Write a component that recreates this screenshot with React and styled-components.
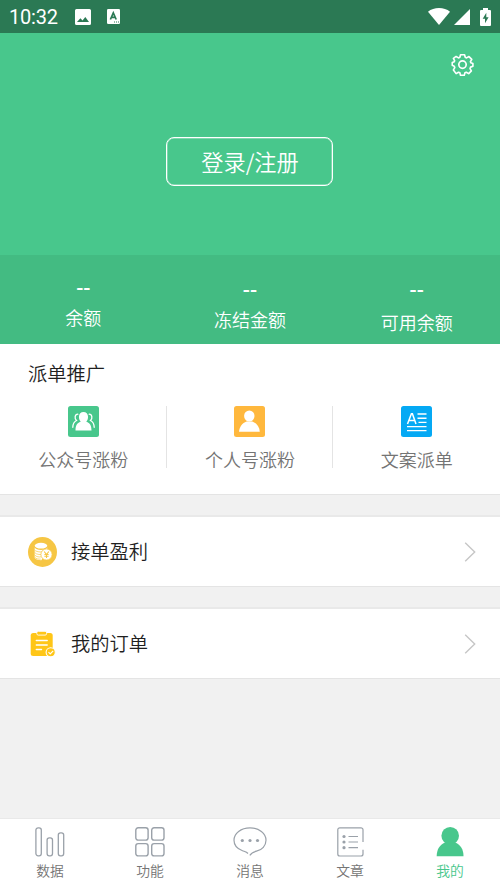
import React from 'react'
import styled, { createGlobalStyle, ThemeProvider } from 'styled-components'

const theme = {
    colors: {
        green: '#48c78c',
        greenDark: '#43bb82',
        status: '#2b7954',
        page: '#f1f1f1',
        line: '#e4e4e4',
        text: '#1f1f1f',
        muted: '#747474',
        icon: '#9aa1a9',
    },
}

const GlobalStyle = createGlobalStyle`
    * {
        box-sizing: border-box;
    }

    body {
        margin: 0;
        font-family: "Noto Sans CJK SC", sans-serif;
        font-weight: 350;
        background: #f1f1f1;
    }
`

const Screen = styled.div`
    display: flex;
    flex-direction: column;
    width: 500px;
    height: 888px;
    overflow: hidden;
    background: ${props => props.theme.colors.page};

    svg {
        display: block;
        flex: none;
    }
`

const StatusBar = styled.header`
    display: flex;
    align-items: center;
    height: 33px;
    flex: none;
    padding: 0 9px;
    color: #fff;
    background: ${props => props.theme.colors.status};
`

const Clock = styled.span`
    width: 66px;
    font: 400 20px/33px Roboto, sans-serif;
    letter-spacing: -.2px;
    padding-top: 2px;
`

const StatusIcons = styled.div`
    display: flex;
    align-items: center;
    gap: ${props => props.$gap};
    margin-left: ${props => (props.$end ? 'auto' : '0')};
`

const Spacer = styled.span`
    width: ${props => props.$width}px;
`

const Hero = styled.section`
    display: flex;
    flex-direction: column;
    align-items: center;
    height: 222px;
    flex: none;
    background: ${props => props.theme.colors.green};
`

const SettingsButton = styled.button`
    align-self: flex-end;
    margin: 20px 26px 61px 0;
    padding: 0;
    border: 0;
    background: none;
`

const LoginButton = styled.button`
    width: 167px;
    height: 49px;
    margin-right: 1px;
    padding: 0 0 2px 1px;
    border: 1px solid #fff;
    box-shadow: inset 0 0 0 .5px rgba(255, 255, 255, .6);
    border-radius: 8px;
    background: none;
    color: #fff;
    font: 350 22.2px/44px "Noto Sans CJK SC", sans-serif;
`

const Stats = styled.section`
    display: grid;
    grid-template-columns: repeat(3, 1fr);
    height: 89px;
    flex: none;
    background: ${props => props.theme.colors.greenDark};
    color: #fff;
`

const Stat = styled.div`
    display: flex;
    flex-direction: column;
    align-items: center;
    padding-top: ${props => props.$top}px;
    font-size: 18px;
    line-height: 22px;
`

const StatValue = styled.span`
    margin-bottom: ${props => props.$gap}px;
    font: 500 21px/22px Roboto, sans-serif;
`

const Promo = styled.section`
    height: 151px;
    flex: none;
    background: #fff;
    border-bottom: 1px solid ${props => props.theme.colors.line};
`

const PromoTitle = styled.h2`
    margin: 0;
    padding: 15px 28px 0;
    font-size: 19.3px;
    font-weight: 350;
    line-height: 28px;
    color: ${props => props.theme.colors.text};
`

const PromoGrid = styled.div`
    display: grid;
    grid-template-columns: repeat(3, 1fr);
    margin-top: 19px;
`

const PromoItem = styled.div`
    display: flex;
    flex-direction: column;
    align-items: center;
    height: 62px;
    color: ${props => props.theme.colors.muted};
    font-size: 18px;
    line-height: 26px;

    &:not(:last-child) {
        box-shadow: inset -1px 0 ${props => props.theme.colors.line};
    }

    span {
        margin-top: 9px;
    }
`

const Row = styled.section`
    display: flex;
    align-items: center;
    height: 72px;
    flex: none;
    margin-top: 20px;
    padding: 0 24px 0 28px;
    background: #fff;
    border-top: 2px solid #e9e9e9;
    border-bottom: 1px solid ${props => props.theme.colors.line};
`

const RowLabel = styled.span`
    flex: 1;
    margin-left: 14px;
    padding-bottom: 1px;
    font-size: 19.3px;
    line-height: 28px;
    color: ${props => props.theme.colors.text};
`

const TabBar = styled.nav`
    display: grid;
    grid-template-columns: repeat(5, 1fr);
    height: 70px;
    margin-top: auto;
    background: #fff;
    border-top: 1px solid #e9e9e9;
`

const Tab = styled.div`
    display: flex;
    flex-direction: column;
    align-items: center;
    padding-top: 8px;
    font-size: 13.8px;
    line-height: 20px;
    color: ${props => (props.$active ? props.theme.colors.green : props.theme.colors.muted)};

    svg {
        margin-bottom: 3px;
        color: ${props => (props.$active ? props.theme.colors.green : props.theme.colors.icon)};
    }
`

const ImageIcon = () => (
    <svg width="16" height="16" viewBox="0 0 16 16">
        <path fill="#fff" fillRule="evenodd" d="M1.5 0h13A1.5 1.5 0 0 1 16 1.500v13a1.500 1.500 0 0 1-1.500 1.500h-13A1.500 1.500 0 0 1 0 14.500v-13A1.500 1.500 0 0 1 1.500 0zM2 13h12l-3.700-5-2.800 3.600L5.400 9.300z" />
    </svg>
)

const KeyboardIcon = () => (
    <svg width="13" height="15" viewBox="0 0 13 15">
        <rect width="13" height="15" rx="1.300" fill="#fff" />
        <path d="M3.400 10.500 6.300 3.800 9.200 10.500M4.500 8.400h3.600" fill="none" stroke="#2b7954" strokeWidth="1.700" />
        <path d="M7 13h1M9 13h1M11 13h1" stroke="#2b7954" strokeWidth="1" />
    </svg>
)

const WifiIcon = () => (
    <svg width="22" height="17" viewBox="0 0 22 17">
        <path fill="#fff" d="M11 17 0 3.700C3 1.300 6.800 0 11 0s8 1.300 11 3.700z" />
    </svg>
)

const SignalIcon = () => (
    <svg width="16" height="16" viewBox="0 0 16 16">
        <path fill="#fff" d="M16 0v16H0z" />
    </svg>
)

const BatteryIcon = () => (
    <svg width="11" height="18" viewBox="0 0 11 18">
        <path fill="#fff" d="M3 0h5v2h2a1 1 0 0 1 1 1v14a1 1 0 0 1-1 1H1a1 1 0 0 1-1-1V3a1 1 0 0 1 1-1h2z" />
        <path fill="#2b7954" d="M6.300 4.800 2.700 10.800h2.300v4.500L8.600 9.300H6.300z" />
    </svg>
)

const GearIcon = () => (
    <svg width="23" height="23" viewBox="0 0 23 23" fill="none" stroke="#fff" strokeWidth="1.700" strokeLinejoin="round">
        <path d="M9.400 1.700h4.200l.7 2.700 1.400.6 2.500-1.400 2.900 2.900-1.400 2.500.5 1.100 2.100.7v2.900l-2.400.9-.6 1.500 1.400 2.400-2.800 2.900-2.500-1.500-1.400.6-.7 2.700H9.400l-.7-2.700-1.400-.6-2.500 1.500L2 17.500l1.400-2.400-.6-1.500-2-.9V9.900l2-.8.5-1.100L2 5.500l2.800-2L7.300 5l1.400-.6z" transform="translate(.5 .1) scale(.96)" />
        <circle cx="11.500" cy="11.600" r="3.700" />
    </svg>
)

const GroupIcon = () => (
    <svg width="31" height="31" viewBox="0 0 31 31">
        <rect width="31" height="31" rx="2.500" fill="#48c78c" />
        <path fill="#fff" d="M7.500 24.500c0-5 1.300-7.200 5.300-9C11.200 14.200 11 12.500 11 10.500 11 7.600 12.800 5.900 15.500 5.900S20 7.600 20 10.500c0 2-.2 3.700-1.800 5 4 1.800 5.300 4 5.300 9z" />
        <path fill="none" stroke="#fff" strokeWidth="1.300" strokeLinecap="round" d="M9.800 8.200C6.800 8.300 6.200 12.500 8.500 14.500 6 15.700 4.900 18 4.800 21.300M21.200 8.200c3 .1 3.600 4.300 1.300 6.300 2.500 1.200 3.600 3.500 3.700 6.800" />
    </svg>
)

const PersonIcon = () => (
    <svg width="31" height="31" viewBox="0 0 31 31">
        <rect width="31" height="31" rx="2.500" fill="#ffb83d" />
        <ellipse cx="15.300" cy="10" rx="5.200" ry="5.500" fill="#fff" />
        <path fill="#fff" d="M5 25.800c.4-5.300 3.400-8.700 7.500-10.300h5.800c4.100 1.600 7.100 5 7.500 10.300z" />
    </svg>
)

const ArticleIcon = () => (
    <svg width="31" height="31" viewBox="0 0 31 31" fill="none" stroke="#fff">
        <rect width="31" height="31" rx="2.500" fill="#05a9f4" stroke="none" />
        <path strokeWidth="1.500" d="M6.500 18 10.400 7.800h1L15 18M8.300 14.400h5.400" />
        <path strokeWidth="1.400" d="M16.500 8h9M16.500 12.200h9M17.500 16.400h8M6 20.600h19.500M6 24.600h19.500" />
    </svg>
)

const CoinsIcon = () => (
    <svg width="29" height="30" viewBox="0 0 29 30">
        <ellipse cx="14.500" cy="15" rx="14.500" ry="15" fill="#f6c644" />
        <ellipse cx="13" cy="8.700" rx="6.300" ry="2.900" fill="#fff" />
        <path fill="#fff" d="M6.700 10.500c1 3.200 11.600 3.200 12.600 0v3l-6 9.800c-2.600 0-5.600-.7-6.600-2.200z" />
        <path fill="none" stroke="#f6c644" strokeWidth=".7" d="M6.700 13c1.500 2.600 11 2.600 12.600 0M6.700 15.500c1.500 2.400 7 2.300 8 1.600M6.700 18c1.500 2 5 2.200 6.500 1.800M6.700 20.300c1.500 1.600 4 2 6 1.800" />
        <circle cx="18.500" cy="17.500" r="5.600" fill="#fff" stroke="#f6c644" strokeWidth=".8" />
        <path fill="none" stroke="#f6c644" strokeWidth="1.100" d="m16.200 14.500 2.300 3 2.300-3M18.500 17.300v3.800M16.400 17.500h4.200M16.400 19.300h4.200" />
    </svg>
)

const OrdersIcon = () => (
    <svg width="29" height="26" viewBox="0 0 29 26">
        <rect x="2.700" y="2" width="22" height="23" rx="2.500" fill="#ffc617" />
        <rect x="8.800" y=".3" width="9.800" height="3.800" rx="1.500" fill="#ffc617" stroke="#fff" strokeWidth=".9" />
        <path stroke="#fff" strokeWidth="1.400" strokeLinecap="round" d="M8.300 9.500h10.900M8.300 14h10.900M8.300 18.500h5.200" />
        <circle cx="22.700" cy="21.300" r="4.600" fill="#ffc617" stroke="#fff" strokeWidth="1.100" />
        <path fill="none" stroke="#fff" strokeWidth="1.200" d="m20.500 21.200 1.700 1.700 3-3" />
    </svg>
)

const Chevron = () => (
    <svg width="12" height="20" viewBox="0 0 12 20" fill="none" stroke="#c6c6c6" strokeWidth="1.400">
        <path d="m1.200.7 9.500 9.300-9.500 9.300" />
    </svg>
)

const DataIcon = () => (
    <svg width="30" height="30" viewBox="0 0 30 30" fill="none" stroke="currentColor" strokeWidth="1.300">
        <rect x=".9" y=".8" width="5.400" height="28" rx="2.200" />
        <rect x="12.100" y="10.800" width="5.400" height="18" rx="2.200" />
        <rect x="23.300" y="5.800" width="5.400" height="23" rx="2.200" />
    </svg>
)

const GridIcon = () => (
    <svg width="30" height="30" viewBox="0 0 30 30" fill="none" stroke="currentColor" strokeWidth="1.400">
        <rect x=".8" y=".8" width="12.300" height="12.300" rx="2.400" />
        <rect x="16.700" y=".8" width="12.300" height="12.300" rx="2.400" />
        <rect x=".8" y="16.600" width="12.300" height="12.300" rx="2.400" />
        <rect x="16.700" y="16.600" width="12.300" height="12.300" rx="2.400" />
    </svg>
)

const MessageIcon = () => (
    <svg width="34" height="30" viewBox="0 0 34 30" fill="none" stroke="currentColor" strokeWidth="1.200">
        <path d="M15 26.500C13.500 24.800 11.800 24.600 9.500 23.700 4.300 21.800 1 18 1 13.200 1 6.300 8 .8 17 .8s16 5.500 16 12.400c0 5.500-4 9.700-9.500 11-3.300.8-5.200 1.700-6.700 4.200" />
        <g fill="currentColor" stroke="none">
            <circle cx="9.300" cy="13.500" r="1.600" />
            <circle cx="17" cy="13.500" r="1.600" />
            <circle cx="24.500" cy="13.500" r="1.600" />
        </g>
    </svg>
)

const NotesIcon = () => (
    <svg width="27" height="30" viewBox="0 0 27 30" fill="none" stroke="currentColor" strokeWidth="1.200">
        <path d="M26 15V2.800a2 2 0 0 0-2-2H2.800a2 2 0 0 0-2 2V27a2 2 0 0 0 2 2H24a2 2 0 0 0 2-2v-4.200" />
        <path d="M11.500 9.500h9.500M11.500 15h9.500M11.500 20.700h9.500" />
        <g fill="currentColor" stroke="none">
            <circle cx="7" cy="9.500" r="1.600" />
            <circle cx="7" cy="15" r="1.600" />
            <circle cx="7" cy="20.700" r="1.600" />
        </g>
    </svg>
)

const MeIcon = () => (
    <svg width="28" height="30" viewBox="0 0 28 30" fill="currentColor">
        <circle cx="14.200" cy="8.800" r="8.800" />
        <path d="M.7 29.300c0-6.800 2.800-11.300 8.300-13.800h10.300c5.500 2.500 8.200 7 8.200 13.800z" />
    </svg>
)

const stats = [
    { label: '余额', top: 22, gap: 7 },
    { label: '冻结金额', top: 24, gap: 7 },
    { label: '可用余额', top: 24, gap: 10 },
]

const promos = [
    { label: '公众号涨粉', Icon: GroupIcon },
    { label: '个人号涨粉', Icon: PersonIcon },
    { label: '文案派单', Icon: ArticleIcon },
]

const rows = [
    { label: '接单盈利', Icon: CoinsIcon },
    { label: '我的订单', Icon: OrdersIcon },
]

const tabs = [
    { label: '数据', Icon: DataIcon },
    { label: '功能', Icon: GridIcon },
    { label: '消息', Icon: MessageIcon },
    { label: '文章', Icon: NotesIcon },
    { label: '我的', Icon: MeIcon, active: true },
]

export default function App() {
    return (
        <ThemeProvider theme={theme}>
            <GlobalStyle />
            <Screen>
                <StatusBar>
                    <Clock>10:32</Clock>
                    <StatusIcons $gap="16px">
                        <ImageIcon />
                        <KeyboardIcon />
                    </StatusIcons>
                    <StatusIcons $gap="0" $end>
                        <WifiIcon />
                        <Spacer $width={4} />
                        <SignalIcon />
                        <Spacer $width={10} />
                        <BatteryIcon />
                    </StatusIcons>
                </StatusBar>
                <Hero>
                    <SettingsButton aria-label="设置">
                        <GearIcon />
                    </SettingsButton>
                    <LoginButton>登录/注册</LoginButton>
                </Hero>
                <Stats>
                    {stats.map(({ label, top, gap }) => (
                        <Stat key={label} $top={top}>
                            <StatValue $gap={gap}>--</StatValue>
                            <span>{label}</span>
                        </Stat>
                    ))}
                </Stats>
                <Promo>
                    <PromoTitle>派单推广</PromoTitle>
                    <PromoGrid>
                        {promos.map(({ label, Icon }) => (
                            <PromoItem key={label}>
                                <Icon />
                                <span>{label}</span>
                            </PromoItem>
                        ))}
                    </PromoGrid>
                </Promo>
                {rows.map(({ label, Icon }) => (
                    <Row key={label}>
                        <Icon />
                        <RowLabel>{label}</RowLabel>
                        <Chevron />
                    </Row>
                ))}
                <TabBar>
                    {tabs.map(({ label, Icon, active }) => (
                        <Tab key={label} $active={active}>
                            <Icon />
                            <span>{label}</span>
                        </Tab>
                    ))}
                </TabBar>
            </Screen>
        </ThemeProvider>
    )
}
